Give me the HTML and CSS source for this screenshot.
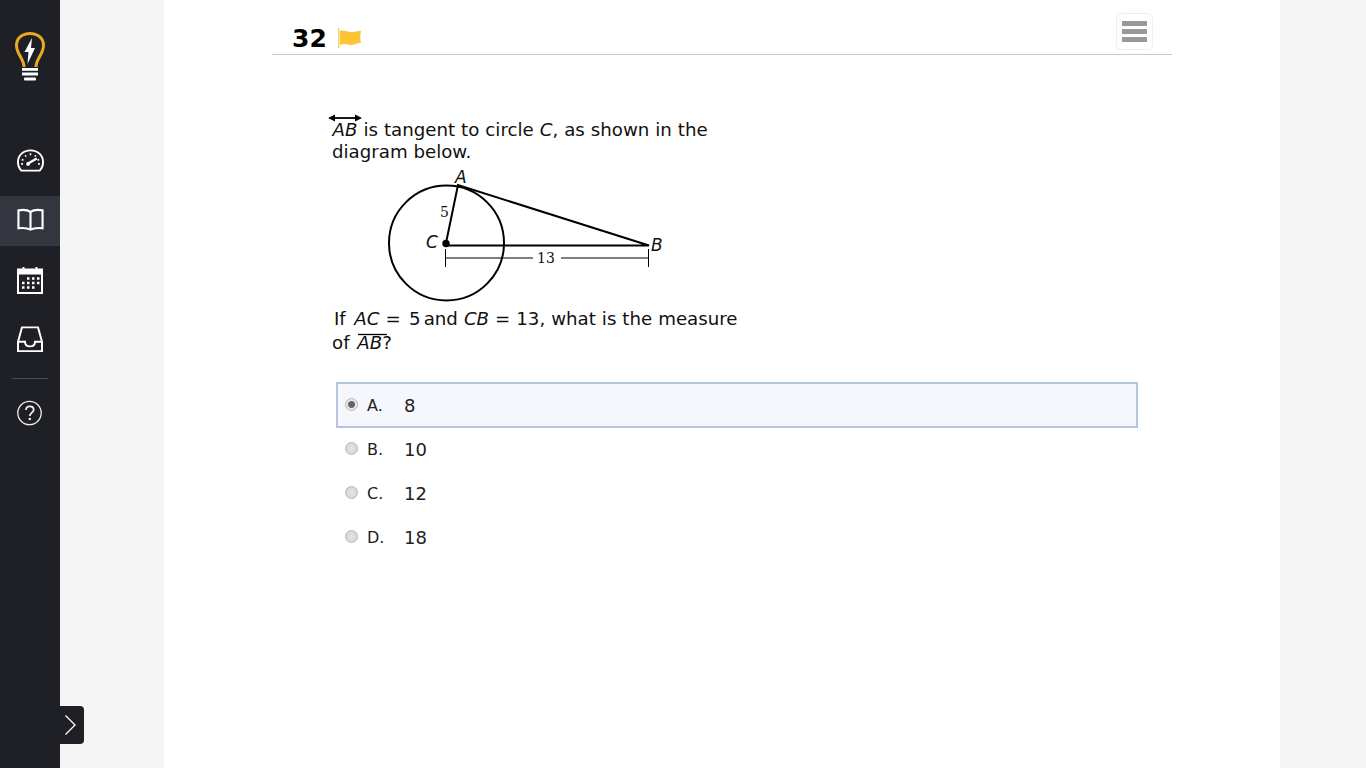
FILE: index.html
```html
<!DOCTYPE html>
<html lang="en">
<head>
    <meta charset="UTF-8">
    <meta name="viewport" content="width=device-width, initial-scale=1.0">
    <title>Question 32</title>
    <link rel="stylesheet" href="styles.css">
</head>
<body>

    <!-- Sidebar -->
    <div class="sidebar">
        <div class="logo">
            <svg width="30" height="50" viewBox="0 0 30 50" fill="none">
                <path d="M9 35 C9 27 1.500 22 1.500 13.500 C1.500 6 7.500 1.500 15 1.500 C22.500 1.500 28.500 6 28.500 13.500 C28.500 22 21 27 21 35" stroke="#e9a820" stroke-width="3"/>
                <path d="M17 6 L9.500 20 L13.500 20 L12.500 32 L20 16 L16 16 Z" fill="#fff"/>
                <rect x="7" y="36" width="16" height="2.800" fill="#fff"/>
                <rect x="7" y="40.500" width="16" height="3" fill="#fff"/>
                <rect x="9" y="45.500" width="12" height="3" rx="1" fill="#fff"/>
            </svg>
        </div>
        <a class="nav-item" href="#">
            <svg width="27" height="24" viewBox="0 0 28 24" fill="none" stroke="#fff">
                <path d="M4.500 22 C2.500 20 1 16.500 1 13 C1 6 6.500 1 14 1 C21.500 1 27 6 27 13 C27 16.500 25.500 20 23.500 22 Z" stroke-width="2"/>
                <path d="M11.500 14.500 L20.500 9.500" stroke-width="2.400"/>
                <circle cx="11.500" cy="15" r="2" fill="#fff" stroke="none"/>
                <path d="M14 4v2M8.500 6l1 1.500M19.500 6l-1 1.500M5 10.500l1.700.7M23 10.500l-1.700.7M4.300 15h1.900M23.700 15h-1.900" stroke-width="1.600"/>
            </svg>
        </a>
        <a class="nav-item active" href="#">
            <svg class="book" width="27" height="24" viewBox="0 0 28 24" fill="none" stroke="#fff" stroke-width="2.200">
                <path d="M14 3.500 C11 1.500 6 1.200 1.500 2 V20.500 C6 20 11 20.300 14 22 C17 20.300 22 20 26.500 20.500 V2 C22 1.200 17 1.500 14 3.500 Z"/>
                <path d="M14 3.500 V22"/>
            </svg>
        </a>
        <a class="nav-item" href="#">
            <svg width="26" height="28" viewBox="0 0 26 28" fill="none">
                <rect x="1" y="3.500" width="24" height="23.500" stroke="#fff" stroke-width="2"/>
                <rect x="1" y="3.500" width="24" height="5" fill="#fff"/>
                <path d="M6.500 1v5M19.500 1v5" stroke="#fff" stroke-width="2"/>
                <path d="M10 12.500h2.500M15 12.500h2.500M20 12.500h2.500M5 17h2.500M10 17h2.500M15 17h2.500M20 17h2.500M5 21.500h2.500M10 21.500h2.500M15 21.500h2.500" stroke="#fff" stroke-width="2.500"/>
            </svg>
        </a>
        <a class="nav-item" href="#">
            <svg width="26" height="26" viewBox="0 0 26 28" preserveAspectRatio="none" fill="none" stroke="#fff" stroke-width="2">
                <path d="M1 17 L5 1.500 H21 L25 17 V27 H1 Z"/>
                <path d="M1 17 H8 C8 20 10 22 13 22 C16 22 18 20 18 17 H25"/>
            </svg>
        </a>
        <div class="nav-divider"></div>
        <a class="nav-item help" href="#">
            <svg width="26" height="26" viewBox="0 0 26 26" fill="none" stroke="#eee">
                <circle cx="12.500" cy="13" r="11.700" stroke-width="1.300"/>
                <path d="M9 10 C9 7.500 10.500 6.300 12.700 6.300 C15 6.300 16.700 7.700 16.700 9.700 C16.700 12.500 12.800 12.800 12.800 16" stroke-width="1.800"/>
                <circle cx="12.800" cy="19" r="1.300" fill="#eee" stroke="none"/>
            </svg>
        </a>
    </div>
    <button class="sidebar-toggle" type="button">
        <svg width="14" height="20" viewBox="0 0 14 20" fill="none" stroke="#fff" stroke-width="1.300"><path d="M0.500 0.500 L10 10 L0.500 19.500"/></svg>
    </button>

    <!-- Main Content -->
    <div class="main-content">
        <div class="sheet">
            <div class="question-head">
                <div class="question-title">
                    <span class="question-number">32</span>
                    <svg class="flag" width="25" height="22" viewBox="0 0 25 22">
                        <rect x="1" y="1" width="1.500" height="20" fill="#f8d06a"/>
                        <path d="M3 4 C7 2.500 10 5 14 5 C18 5 20 3.500 24 4 C23 8 23 12 24 16 C20 15.500 18 18 14 18 C10 18 7 16 3 18 Z" fill="#fdc437"/>
                    </svg>
                </div>
                <button class="menu-button" type="button">
                    <span></span><span></span><span></span>
                </button>
            </div>

            <!-- Question picture -->
            <svg class="figure" width="420" height="250" viewBox="0 0 420 250">
                <g class="q-text">
                    <text class="spaced" x="2.500" y="38"><tspan class="it">AB</tspan> is tangent to circle <tspan class="it">C</tspan>, as shown in the</text>
                    <text x="2" y="60">diagram below.</text>
                    <text class="spaced" x="4" y="227">If <tspan class="it" dx="2.500">AC</tspan> = <tspan dx="2.500">5</tspan> <tspan dx="-3">and</tspan> <tspan class="it">CB</tspan> = 13, what is the measure</text>
                    <text x="2" y="251">of <tspan class="it" dx="2">AB</tspan>?</text>
                </g>
                <path d="M1 20 H29" stroke="#000" stroke-width="1.800"/>
                <path d="M-2 20 L5 16.500 V23.500 Z M32 20 L25 16.500 V23.500 Z" fill="#000"/>
                <path d="M28 236.500 H57" stroke="#000" stroke-width="1.300"/>
                <circle cx="116.500" cy="145" r="57.500" fill="none" stroke="#000" stroke-width="2"/>
                <path d="M116 145 L128 87 L319 147.500 H116" fill="none" stroke="#000" stroke-width="2"/>
                <circle cx="116" cy="145.500" r="3.700" fill="#000"/>
                <path d="M115.500 151 V169 M115.500 160 H203 M231 160 H318.500 M318.500 151 V169" fill="none" stroke="#000" stroke-width="1"/>
                <g class="fig-num">
                    <text x="110" y="119">5</text>
                    <text x="207" y="165">13</text>
                </g>
                <g class="fig-label">
                    <text x="125" y="85">A</text>
                    <text x="96" y="150">C</text>
                    <text x="321" y="153">B</text>
                </g>
            </svg>

            <ul class="answers">
                <li class="answer selected">
                    <span class="radio"></span>
                    <span class="letter">A.</span>
                    <span class="value">8</span>
                </li>
                <li class="answer">
                    <span class="radio"></span>
                    <span class="letter">B.</span>
                    <span class="value">10</span>
                </li>
                <li class="answer">
                    <span class="radio"></span>
                    <span class="letter">C.</span>
                    <span class="value">12</span>
                </li>
                <li class="answer">
                    <span class="radio"></span>
                    <span class="letter">D.</span>
                    <span class="value">18</span>
                </li>
            </ul>
        </div>
    </div>

</body>
</html>
```

FILE: styles.css
```css
* {
    margin: 0;
    padding: 0;
    box-sizing: border-box;
}

body {
    font-family: "DejaVu Sans", Verdana, sans-serif;
    background-color: #f5f5f5;
    color: #222;
    display: flex;
    height: 100vh;
    overflow: hidden;
    position: relative;
}

/* Sidebar */
.sidebar {
    width: 60px;
    flex-shrink: 0;
    background-color: #1f2026;
    display: flex;
    flex-direction: column;
    align-items: stretch;
    height: 100vh;
}

.logo {
    height: 136px;
    padding-top: 32px;
    display: flex;
    justify-content: center;
}

.nav-item {
    height: 50px;
    margin-bottom: 9px;
    display: flex;
    align-items: center;
    justify-content: center;
    text-decoration: none;
}

.nav-item.active {
    background-color: #33363f;
    margin-top: 1px;
}

.book {
    margin-top: -3px;
}

.nav-divider {
    height: 1px;
    margin: 5px 12px 9px;
    background-color: #4a4b50;
}

.sidebar-toggle {
    position: absolute;
    left: 60px;
    top: 706px;
    width: 24px;
    height: 38px;
    border: none;
    border-radius: 0 4px 4px 0;
    background-color: #1f2026;
    display: flex;
    align-items: center;
    justify-content: center;
}

/* Main Content */
.main-content {
    flex-grow: 1;
    display: flex;
    justify-content: center;
    padding-left: 104px;
    padding-right: 86px;
}

.sheet {
    width: 1116px;
    height: 100vh;
    background: #ffffff;
    padding: 0 108px;
}

.question-head {
    height: 55px;
    border-bottom: 1px solid #c8c8c8;
    display: flex;
    justify-content: space-between;
    padding: 13px 19px 0 20px;
}

.question-title {
    display: flex;
    align-items: flex-start;
    gap: 10px;
    padding-top: 12px;
}

.question-number {
    font-size: 25px;
    font-weight: bold;
    line-height: 28px;
    color: #000;
}

.flag {
    margin-top: 2px;
}

.menu-button {
    width: 37px;
    height: 37px;
    background: #fff;
    border: 1px solid #eeeeee;
    border-radius: 5px;
    display: flex;
    flex-direction: column;
    align-items: center;
    justify-content: center;
    gap: 3px;
}

.menu-button span {
    width: 25px;
    height: 5px;
    background-color: #999;
}

/* Question picture */
.figure {
    display: block;
    margin: 43px 0 0 58px;
    overflow: visible;
}

.q-text {
    font-size: 18.200px;
    fill: #111;
}

.spaced {
    word-spacing: 0.200px;
}

.it {
    font-style: italic;
}

.fig-num {
    font-family: "DejaVu Serif", serif;
    font-size: 14px;
    fill: #111;
}

.fig-label {
    font-style: italic;
    font-size: 17px;
    fill: #111;
}

/* Answers */
.answers {
    list-style: none;
    margin: 34px 0 0 64px;
    width: 802px;
}

.answer {
    height: 44px;
    display: flex;
    align-items: center;
    padding-left: 9px;
    border: 0 solid transparent;
}

.answer.selected {
    height: 46px;
    margin-bottom: -1px;
    border: 2px solid #b5c5e0;
    background-color: #f5f7fc;
    padding-left: 7px;
}

.answer:nth-child(2) {
    margin-top: -1px;
}

.radio {
    width: 13px;
    height: 13px;
    border-radius: 50%;
    border: 1px solid #b8b8b8;
    background: radial-gradient(circle, #e6e6e6, #d0d0d0);
    margin-right: 9px;
    margin-top: -2px;
    flex-shrink: 0;
}

.answer.selected .radio {
    background: radial-gradient(circle, #666 0, #666 3px, #e8e8e8 4px);
}

.letter {
    width: 37px;
    font-size: 16px;
    color: #222;
}

.value {
    font-size: 18px;
    color: #222;
}
```
